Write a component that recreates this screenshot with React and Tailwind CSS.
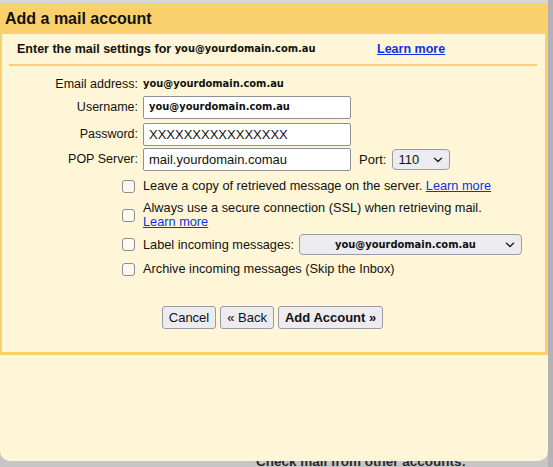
import React from 'react';

const sans = "font-['Liberation_Sans',Arial,sans-serif]";
const cond = "font-['DejaVu_Sans_Condensed','DejaVu_Sans',sans-serif] [font-stretch:condensed] font-bold text-[11px]";

const Chevron = () => (
    <svg width="10" height="6" viewBox="0 0 10 6" fill="none" stroke="#222" strokeWidth="1.4" strokeLinecap="round" strokeLinejoin="round">
        <path d="M1.5 1.2 5 4.6 8.5 1.2" />
    </svg>
);

const Checkbox = () => (
    <span className="block w-[13px] h-[13px] shrink-0 rounded-[3px] border border-[#8c8c98] bg-[#fffaf0]" />
);

const Field = ({ children, className = '' }) => (
    <div className={`h-[23px] w-[208px] flex items-center rounded-[2px] border border-[#8f8f9c] bg-white px-[5px] ${className}`}>
        {children}
    </div>
);

const Button = ({ children, bold }) => (
    <button className={`h-[23px] px-[6px] rounded-[3px] border border-[#9a9aa8] bg-[#ebebf0] text-[13px] text-[#111] ${bold ? 'font-bold' : ''}`}>
        {children}
    </button>
);

const Link = ({ children }) => (
    <span className="text-[#1030e6] underline underline-offset-[1px]">{children}</span>
);

const App = () => {
    return (
        <div className={`${sans} relative w-[553px] h-[467px] overflow-hidden bg-[#c6c6c6] text-[12.5px] text-[#111]`}>
            {/* page behind the dialog */}
            <div className="absolute left-[256px] top-[452px] text-[13.5px] font-bold text-[#2a2a2a]">
                Check mail from other accounts:
            </div>
            <div className="absolute right-0 top-0 w-[5px] h-[467px] bg-[#b3b3b3]" />
            <div className="h-[3px] bg-[#d6d6d6]" />

            <div className="relative w-[548px] h-[458px] bg-[#fff6d7] rounded-b-[10px]">
                <div className="h-[31px] bg-[#f9d06c] flex items-center pl-[5px] pt-[1px] text-[16px] font-bold">
                    Add a mail account
                </div>

                <div className="h-[321px] border-l-2 border-r-[3px] border-b-[3px] border-[#f9d06c] bg-[#fff6d7]">
                    <div className="flex items-center h-[30px] pt-[1px] pl-[15px] font-bold text-[12.5px]">
                        <div className="w-[360px] flex items-center">
                            <span>Enter the mail settings for&nbsp;</span>
                            <span className={cond}>you@yourdomain.com.au</span>
                        </div>
                        <Link>Learn more</Link>
                    </div>
                    <div className="ml-[7px] w-[528px] h-[2px] bg-[#f9d06c]" />

                    <div className="grid grid-cols-[136px_auto] gap-x-[5px] items-center mt-[8px]">
                        <div className="text-right h-[20px] leading-[20px]">Email address:</div>
                        <div className={`${cond} h-[20px] leading-[20px]`}>you@yourdomain.com.au</div>

                        <div className="text-right mt-[2px]">Username:</div>
                        <Field className="mt-[2px]"><span className={cond}>you@yourdomain.com.au</span></Field>

                        <div className="text-right mt-[4px]">Password:</div>
                        <Field className="mt-[4px] text-[13px]">XXXXXXXXXXXXXXXX</Field>

                        <div className="text-right mt-[2px]">POP Server:</div>
                        <div className="flex items-center mt-[2px]">
                            <Field className="text-[13px]">mail.yourdomain.comau</Field>
                            <span className="ml-[8px] text-[13px]">Port:</span>
                            <div className="ml-[6px] w-[58px] h-[21px] flex items-center justify-between pl-[5px] pr-[6px] rounded-[4px] border border-[#9b9ba8] bg-[#ebebf0] text-[13px]">
                                <span>110</span>
                                <Chevron />
                            </div>
                        </div>
                    </div>

                    <div className="ml-[120px] mt-[7px] flex flex-col text-[12.75px] leading-[14px]">
                        <div className="flex items-center gap-[8px] h-[16px]">
                            <Checkbox />
                            <span>Leave a copy of retrieved message on the server. <Link>Learn more</Link></span>
                        </div>
                        <div className="flex items-center gap-[8px] mt-[7px]">
                            <Checkbox />
                            <span>Always use a secure connection (SSL) when retrieving mail.<br /><Link>Learn more</Link></span>
                        </div>
                        <div className="flex items-center gap-[8px] mt-[5px]">
                            <Checkbox />
                            <span>Label incoming messages:</span>
                            <div className="-ml-[3px] w-[223px] h-[21px] flex items-center rounded-[4px] border border-[#9b9ba8] bg-[#ebebf0] pr-[6px]">
                                <span className={`${cond} flex-1 text-center pl-[6px]`}>you@yourdomain.com.au</span>
                                <Chevron />
                            </div>
                        </div>
                        <div className="flex items-center gap-[8px] mt-[6px] h-[16px]">
                            <Checkbox />
                            <span>Archive incoming messages (Skip the Inbox)</span>
                        </div>
                    </div>

                    <div className="flex justify-center gap-[4px] mt-[29px] pr-[2px]">
                        <Button>Cancel</Button>
                        <Button>« Back</Button>
                        <Button bold>Add Account »</Button>
                    </div>
                </div>
            </div>
        </div>
    );
};

export default App;
